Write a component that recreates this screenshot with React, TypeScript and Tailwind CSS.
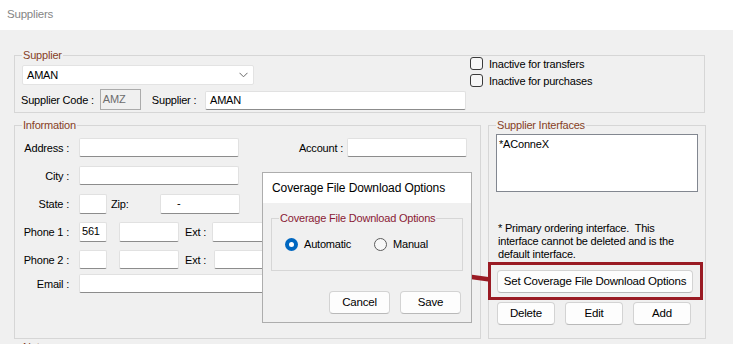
import React from 'react';

const legendCls = 'ml-0 px-[1px] h-[14px] leading-[14px] text-[#86401f]';

const TextBox = ({ className = '', value = '' }: { className?: string; value?: string }) => (
  <div
    className={`h-[19px] shrink-0 bg-white border border-[#e1e1e1] border-b-[#8c8c8c] rounded-[2px] px-[2px] leading-[17px] text-black whitespace-nowrap overflow-hidden ${className}`}
  >
    {value}
  </div>
);

const Label = ({ children, className = '' }: { children: React.ReactNode; className?: string }) => (
  <span className={`shrink-0 whitespace-nowrap leading-[14px] ${className}`}>{children}</span>
);

const WinButton = ({ children, className = '' }: { children: React.ReactNode; className?: string }) => (
  <button
    className={`h-[23px] shrink-0 rounded-[4px] border border-[#d3d3d3] border-b-[#b9b9b9] bg-[#fdfdfd] text-black text-[11.5px] leading-[21px] ${className}`}
  >
    {children}
  </button>
);

const CheckBox = ({ label }: { label: string }) => (
  <div className="flex items-center gap-[6px] h-[13px]">
    <span className="w-[13px] h-[13px] rounded-[3px] border border-[#3b3b3b] bg-[#f7f7f7]" />
    <span className="leading-[14px] whitespace-nowrap">{label}</span>
  </div>
);

export default function App() {
  return (
    <div className="relative w-[733px] h-[344px] overflow-hidden bg-[#f0f0f0] text-[11px] tracking-[-0.2px] text-black font-['Liberation_Sans',Arial,sans-serif]">
      {/* window title */}
      <div className="h-[30px] bg-white flex items-center pl-[7px] text-[11.5px] text-[#858585]">Suppliers</div>

      <div className="pl-[14px] pt-[18px]">
        {/* Supplier group */}
        <fieldset className="w-[691px] h-[65px] border border-[#d6d6d6] pl-[7px]">
          <legend className={legendCls}>Supplier</legend>
          <div className="flex gap-[4px]">
            <div className="w-[444px] flex flex-col">
              <div className="mt-[3px] w-[232px] h-[20px] bg-white border border-[#e3e3e3] rounded-[2px] flex items-center pl-[4px] pr-[5px]">
                <span>AMAN</span>
                <svg className="ml-auto" width="9" height="6" viewBox="0 0 9 6">
                  <polyline points="0.5,0.8 4.5,4.8 8.5,0.8" fill="none" stroke="#6a6a6a" strokeWidth="1" />
                </svg>
              </div>
              <div className="mt-[4px] flex items-center">
                <Label className="-ml-[1px]">Supplier Code :</Label>
                <div className="ml-[6px] w-[41px] h-[21px] border border-[#ababab] bg-[#f0f0f0] pl-[2px] leading-[18px] text-[#6d6d6d]">AMZ</div>
                <Label className="ml-[11px]">Supplier :</Label>
                <TextBox className="ml-auto w-[261px] mt-[1px] pl-[4px]" value="AMAN" />
              </div>
            </div>
            <div className="-mt-[5px] flex flex-col gap-[4px]">
              <CheckBox label="Inactive for transfers" />
              <CheckBox label="Inactive for purchases" />
            </div>
          </div>
        </fieldset>

        <div className="mt-[5px] flex gap-[7px]">
          {/* Information group */}
          <fieldset className="w-[467px] h-[221px] border border-[#d6d6d6] pl-[7px] pr-[13px]">
            <legend className={legendCls}>Information</legend>
            <div className="flex flex-col">
              <div className="mt-[6px] flex items-center">
                <Label className="w-[47px] text-right">Address :</Label>
                <TextBox className="ml-[10px] w-[160px]" />
                <Label className="ml-auto">Account :</Label>
                <TextBox className="ml-[4px] w-[120px]" />
              </div>
              <div className="mt-[9px] flex items-center">
                <Label className="w-[47px] text-right">City :</Label>
                <TextBox className="ml-[10px] w-[160px]" />
                <Label className="ml-[55px]">Default Invoice Type :</Label>
              </div>
              <div className="mt-[9px] flex items-center">
                <Label className="w-[47px] text-right">State :</Label>
                <TextBox className="ml-[10px] w-[28px] h-[20px]" />
                <Label className="ml-[4px] w-[49px]">Zip:</Label>
                <TextBox className="w-[80px] h-[20px] pl-[16px]" value="-" />
              </div>
              <div className="mt-[8px] flex items-center">
                <Label className="w-[47px] text-right">Phone 1 :</Label>
                <TextBox className="ml-[10px] w-[28px] h-[20px]" value="561" />
                <TextBox className="ml-[12px] w-[60px] h-[20px]" />
                <Label className="ml-[6px] w-[27px]">Ext :</Label>
                <TextBox className="w-[110px] h-[20px]" />
              </div>
              <div className="mt-[8px] flex items-center">
                <Label className="w-[47px] text-right">Phone 2 :</Label>
                <TextBox className="ml-[10px] w-[28px]" />
                <TextBox className="ml-[12px] w-[60px]" />
                <Label className="ml-[6px] w-[29px]">Ext :</Label>
                <TextBox className="w-[110px]" />
              </div>
              <div className="mt-[5px] flex items-center">
                <Label className="w-[47px] text-right">Email :</Label>
                <TextBox className="ml-[10px] w-[300px]" />
              </div>
            </div>
          </fieldset>

          {/* Supplier Interfaces group */}
          <fieldset className="w-[218px] h-[221px] border border-[#d6d6d6] pl-[7px]">
            <legend className={legendCls}>Supplier Interfaces</legend>
            <div className="flex flex-col">
              <div className="mt-[2px] w-[202px] h-[58px] bg-white border border-[#828790] pl-[2px] pt-[2px] leading-[14px]">
                *AConneX
              </div>
              <p className="mt-[30px] pl-[2px] w-[200px] leading-[13px]">
                * Primary ordering interface.&nbsp; This interface cannot be deleted and is the default interface.
              </p>
              <WinButton className="mt-[9px] ml-[1px] w-[196px] border-[#0067c0] border-b-[#0067c0]">
                Set Coverage File Download Options
              </WinButton>
              <div className="mt-[9px] ml-[1px] flex gap-[10px]">
                <WinButton className="w-[58px]">Delete</WinButton>
                <WinButton className="w-[58px]">Edit</WinButton>
                <WinButton className="w-[58px]">Add</WinButton>
              </div>
            </div>
          </fieldset>
        </div>

        <fieldset className="mt-[1px] w-[691px] h-[40px] border border-[#d6d6d6] pl-[7px]">
          <legend className={legendCls}>Notes</legend>
        </fieldset>
      </div>

      {/* red highlight around the button */}
      <div className="absolute left-[488px] top-[262px] w-[215px] h-[38px] border-[3px] border-[#9a1b24]" />

      {/* arrow */}
      <svg className="absolute left-[428px] top-[260px]" width="66" height="28" viewBox="0 0 66 28">
        <line x1="22" y1="14" x2="62" y2="19.5" stroke="#9a1b24" strokeWidth="4.5" />
        <polygon points="5,13 25,5.5 23.5,23" fill="#9a1b24" />
      </svg>

      {/* dialog */}
      <div className="absolute left-[262px] top-[172px] w-[210px] h-[151px] border border-[#adadad] bg-[#f0f0f0] flex flex-col">
        <div className="h-[30px] bg-white flex items-center pl-[9px] text-[12px] tracking-[-0.1px]">
          Coverage File Download Options
        </div>
        <fieldset className="mt-[8px] ml-[8px] w-[192px] h-[60px] border border-[#d6d6d6] pl-[7px]">
          <legend className="px-[1px] h-[14px] leading-[14px] text-[#8a1a35]">Coverage File Download Options</legend>
          <div className="mt-[12px] ml-[6px] flex items-center">
            <div className="w-[89px] flex items-center gap-[6px]">
              <span className="w-[13px] h-[13px] rounded-full bg-[#0067c0] flex items-center justify-center">
                <span className="w-[5px] h-[5px] rounded-full bg-white" />
              </span>
              <span className="leading-[14px]">Automatic</span>
            </div>
            <div className="flex items-center gap-[6px]">
              <span className="w-[13px] h-[13px] rounded-full border border-[#5c5c5c] bg-[#f7f7f7]" />
              <span className="leading-[14px]">Manual</span>
            </div>
          </div>
        </fieldset>
        <div className="mt-[20px] pr-[10px] flex justify-end gap-[10px]">
          <WinButton className="w-[61px]">Cancel</WinButton>
          <WinButton className="w-[61px]">Save</WinButton>
        </div>
      </div>
    </div>
  );
}
